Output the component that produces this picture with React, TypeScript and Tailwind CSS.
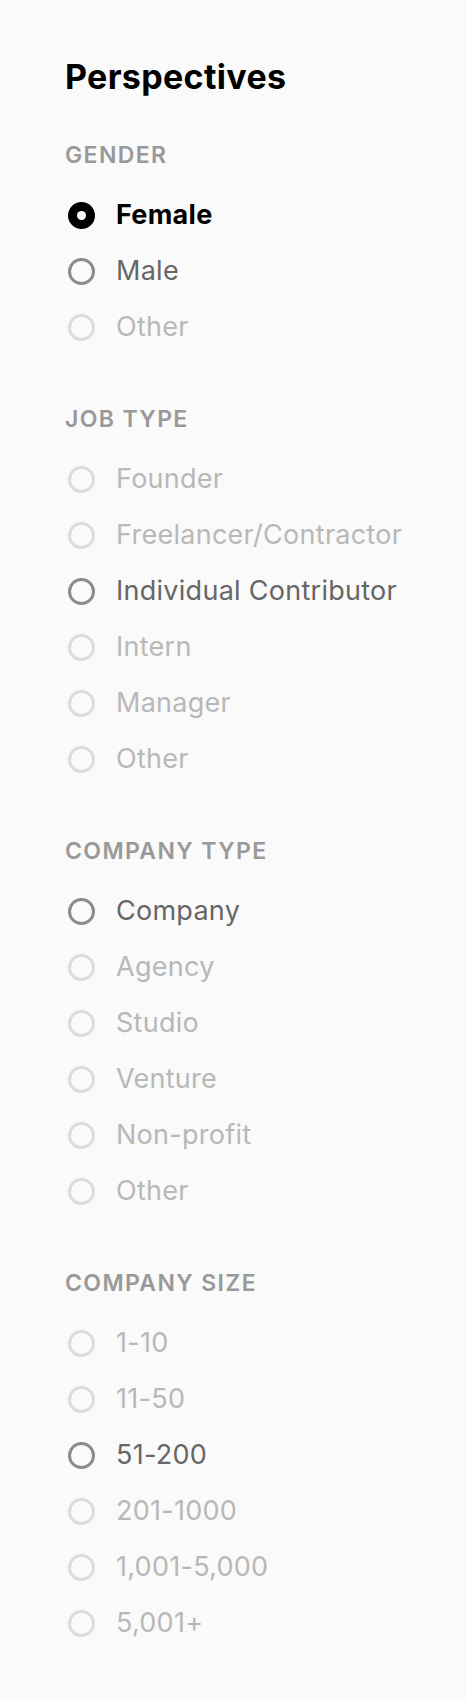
type Option = { label: string; state: 'selected' | 'available' | 'disabled' };

const SECTIONS: { title: string; options: Option[] }[] = [
  {
    title: 'Gender',
    options: [
      { label: 'Female', state: 'selected' },
      { label: 'Male', state: 'available' },
      { label: 'Other', state: 'disabled' },
    ],
  },
  {
    title: 'Job Type',
    options: [
      { label: 'Founder', state: 'disabled' },
      { label: 'Freelancer/Contractor', state: 'disabled' },
      { label: 'Individual Contributor', state: 'available' },
      { label: 'Intern', state: 'disabled' },
      { label: 'Manager', state: 'disabled' },
      { label: 'Other', state: 'disabled' },
    ],
  },
  {
    title: 'Company Type',
    options: [
      { label: 'Company', state: 'available' },
      { label: 'Agency', state: 'disabled' },
      { label: 'Studio', state: 'disabled' },
      { label: 'Venture', state: 'disabled' },
      { label: 'Non-profit', state: 'disabled' },
      { label: 'Other', state: 'disabled' },
    ],
  },
  {
    title: 'Company Size',
    options: [
      { label: '1-10', state: 'disabled' },
      { label: '11-50', state: 'disabled' },
      { label: '51-200', state: 'available' },
      { label: '201-1000', state: 'disabled' },
      { label: '1,001-5,000', state: 'disabled' },
      { label: '5,001+', state: 'disabled' },
    ],
  },
];

function Radio({ state }: { state: Option['state'] }) {
  if (state === 'selected') {
    return (
      <span className="flex h-[27px] w-[27px] shrink-0 items-center justify-center rounded-full bg-black">
        <span className="h-[9px] w-[9px] rounded-full bg-white" />
      </span>
    );
  }
  return (
    <span
      className={`h-[27px] w-[27px] shrink-0 rounded-full border-[3px] ${
        state === 'available' ? 'border-[#8c8c8c]' : 'border-[#dcdcdc]'
      }`}
    />
  );
}

export default function App() {
  return (
    <div className="min-h-screen w-full bg-[#fafafa] pt-[57px] pr-[30px] pb-[51px] pl-[65px] font-['Inter',sans-serif]">
      <h1 className="text-[34px] leading-[40px] font-bold tracking-[0.01em] text-black">Perspectives</h1>

      <div className="mt-[46px] flex flex-col gap-[52px]">
        {SECTIONS.map((section) => (
          <section key={section.title} className="flex flex-col">
            <h2 className="mb-[20px] text-[23px] leading-[24px] font-semibold tracking-[0.06em] text-[#999999] uppercase">
              {section.title}
            </h2>
            {section.options.map((opt) => (
              <label key={opt.label} className="flex h-[56px] items-center gap-[21px] pl-[3px]">
                <Radio state={opt.state} />
                <span
                  className={`text-[27px] tracking-[0.01em] whitespace-nowrap ${
                    opt.state === 'selected'
                      ? 'font-bold text-black'
                      : opt.state === 'available'
                        ? 'text-[#666666]'
                        : 'text-[#b8b8b8]'
                  }`}>
                  {opt.label}
                </span>
              </label>
            ))}
          </section>
        ))}
      </div>
    </div>
  );
}
